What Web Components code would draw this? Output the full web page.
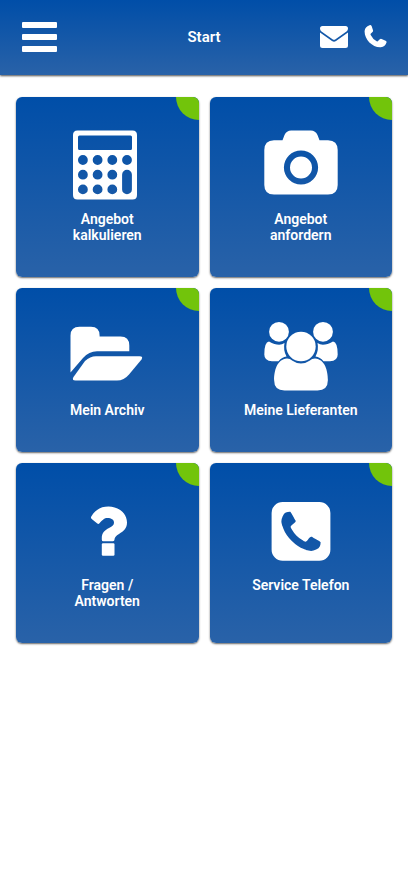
<!DOCTYPE html>
<html lang="de">
<head>
<meta charset="utf-8">
<meta name="viewport" content="width=device-width, initial-scale=1">
<title>Start</title>
<style>
body {
  margin: 0;
  background: #fff;
  font-family: Roboto, "Liberation Sans", sans-serif;
}
</style>
</head>
<body>

<start-page></start-page>

<template id="app-header-template">
<style>
:host {
  display: block;
  background: linear-gradient(#004ea8, #2962a8);
  box-shadow: 0 1px 2px rgba(0, 0, 0, 0.7);
  color: #fff;
}
header {
  display: grid;
  grid-template-columns: 1fr auto 1fr;
  align-items: center;
  box-sizing: border-box;
  height: 75px;
  padding: 0 21px 2px;
}
h1 {
  margin: 0;
  font-size: 15px;
  line-height: 16px;
  font-weight: 600;
}
nav {
  display: flex;
  justify-content: flex-end;
  align-items: center;
  gap: 16px;
}
button, a {
  display: block;
  padding: 0;
  border: 0;
  background: none;
  color: inherit;
}
button {
  justify-self: start;
  cursor: pointer;
}
svg {
  display: block;
  fill: currentColor;
}
</style>
<header>
  <button type="button" aria-label="Menü">
    <svg width="36" height="30" viewBox="0 0 36 30">
      <rect x="1" width="35" height="6" rx="1"/>
      <rect x="1" y="12" width="35" height="6" rx="1"/>
      <rect x="1" y="24" width="35" height="6" rx="1"/>
    </svg>
  </button>
  <h1><slot></slot></h1>
  <nav>
    <a href="#nachricht" aria-label="Nachricht">
      <svg width="28" height="24" viewBox="0 0 28 24">
        <path d="M0 3.500Q0 1 2.500 1H25.500Q28 1 28 3.500Q28 5.500 26.500 6.500L15.500 14.300Q14 15.300 12.500 14.300L1.500 6.500Q0 5.500 0 3.500Z"/>
        <path d="M0 7.600L12 16.100Q14 17.400 16 16.100L28 7.600V20.500Q28 23 25.500 23H2.500Q0 23 0 20.500Z"/>
      </svg>
    </a>
    <a href="#telefon" aria-label="Telefon">
      <svg width="23" height="24" viewBox="0 0 23 24">
        <path d="M5.500 .2Q7 -.2 7.700 1.200L9 5.300Q9.300 6.400 8.500 7.100L6.700 8.700Q6.300 9.200 6.700 10Q8.700 14.200 12.700 16.200Q13.500 16.600 14 16.100L15.800 14.300Q16.600 13.600 17.600 14L21.600 15.700Q22.800 16.300 22.500 17.600Q21.400 21.800 16.800 22.300C8.500 22.800 .2 14.500 .6 6Q1 1.600 5.500 .2Z"/>
      </svg>
    </a>
  </nav>
</header>
</template>

<template id="menu-tile-template">
<style>
:host {
  display: block;
}
a {
  position: relative;
  display: flex;
  flex-direction: column;
  align-items: center;
  gap: 10px;
  box-sizing: border-box;
  height: 100%;
  padding: 32px 16px 34px;
  overflow: hidden;
  border-radius: 6px;
  background: linear-gradient(#004ea8, #2962a8);
  box-shadow: 0 1px 2px rgba(0, 0, 0, 0.6);
  color: #fff;
  font-size: 14px;
  line-height: 16px;
  font-weight: 600;
  text-align: center;
  text-decoration: none;
}
/* green quarter circle in the corner */
a::after {
  content: "";
  position: absolute;
  top: -23px;
  right: -23px;
  width: 46px;
  height: 46px;
  border-radius: 50%;
  background: #72c40b;
}
::slotted(svg) {
  display: block;
  width: 80px;
  height: 72px;
  fill: #fff;
}
span {
  max-width: 115px;
}
</style>
<a>
  <slot name="icon"></slot>
  <span><slot></slot></span>
</a>
</template>

<template id="start-page-template">
<style>
:host {
  display: block;
}
main {
  display: grid;
  grid-template-columns: 1fr 1fr;
  gap: 11px;
  padding: 22px 16px;
}
</style>
<app-header>Start</app-header>
<main>
  <menu-tile href="#kalkulieren">
    <svg slot="icon" viewBox="0 0 80 72" aria-hidden="true">
      <path fill-rule="evenodd" d="M10 1.500H65.500Q70 1.500 70 6V66Q70 70.500 65.500 70.500H10.500Q6 70.500 6 66V6Q6 1.500 10.500 1.500ZM12.500 6.500Q11 6.500 11 8V19.500Q11 21 12.500 21H63.500Q65 21 65 19.500V8Q65 6.500 63.500 6.500ZM11 31a4.900 4.900 0 1 0 9.800 0a4.900 4.900 0 1 0-9.800 0ZM25.700 31a4.900 4.900 0 1 0 9.800 0a4.900 4.900 0 1 0-9.800 0ZM40.400 31a4.900 4.900 0 1 0 9.800 0a4.900 4.900 0 1 0-9.800 0ZM55.100 31a4.900 4.900 0 1 0 9.800 0a4.900 4.900 0 1 0-9.800 0ZM11 45.700a4.900 4.900 0 1 0 9.800 0a4.900 4.900 0 1 0-9.800 0ZM25.700 45.700a4.900 4.900 0 1 0 9.800 0a4.900 4.900 0 1 0-9.800 0ZM40.400 45.700a4.900 4.900 0 1 0 9.800 0a4.900 4.900 0 1 0-9.800 0ZM55.100 45.700a4.900 4.900 0 0 1 9.800 0V60.400a4.900 4.900 0 0 1-9.800 0ZM11 60.400a4.900 4.900 0 1 0 9.800 0a4.900 4.900 0 1 0-9.800 0ZM25.700 60.400a4.900 4.900 0 1 0 9.800 0a4.900 4.900 0 1 0-9.800 0ZM40.400 60.400a4.900 4.900 0 1 0 9.800 0a4.900 4.900 0 1 0-9.800 0Z"/>
    </svg>
    Angebot kalkulieren
  </menu-tile>
  <menu-tile href="#anfordern">
    <svg slot="icon" viewBox="0 0 80 72" aria-hidden="true">
      <path fill-rule="evenodd" d="M13 11.300H21.500L23.500 6Q25.500 1.500 30.200 1.500H49.800Q54.500 1.500 56.500 6L58.500 11.300H67Q76.700 11.500 76.700 21.100V56Q76.700 65.500 67 65.500H13Q3.300 65.500 3.300 56V21.100Q3.300 11.500 13 11.300ZM22.900 38.500a17.100 17.100 0 1 0 34.200 0a17.100 17.100 0 1 0-34.200 0ZM29 38.500a11 11 0 1 1 22 0a11 11 0 1 1-22 0Z"/>
    </svg>
    Angebot anfordern
  </menu-tile>
  <menu-tile href="#archiv">
    <svg slot="icon" viewBox="0 0 80 72" aria-hidden="true">
      <path d="M3.500 52.500V15.500Q3.500 6.700 12.500 6.700H24Q32.600 6.700 32.600 15.500V16.500H53.500Q62.300 16.500 62.300 25.500V31.300H30Q22 31.300 16 38Z"/>
      <path d="M18 41Q23 36.200 29 36.200H72.500Q76.500 36.200 74.500 39.500L62 54.500Q57 60.500 50 60.500H8.500Q4.500 60.500 6.500 57Z"/>
    </svg>
    Mein Archiv
  </menu-tile>
  <menu-tile href="#lieferanten">
    <svg slot="icon" viewBox="0 0 80 72" aria-hidden="true">
      <circle cx="18" cy="11.800" r="9.900"/>
      <circle cx="62" cy="11.800" r="9.900"/>
      <circle cx="40" cy="26.500" r="14.700"/>
      <path d="M8 21.500Q18 27 23.500 23Q22 30 25.500 36.500Q21 37 17.500 41.200H11Q3.300 41 3.300 34.500Q3.300 22 8 21.500Z"/>
      <path d="M72 21.500Q62 27 56.500 23Q58 30 54.500 36.500Q59 37 62.500 41.200H69Q76.700 41 76.700 34.500Q76.700 22 72 21.500Z"/>
      <path d="M26 38.500Q29 38.500 31.500 40.700Q40 46.500 48.500 40.700Q51 38.500 54 38.500C64 39 66.900 51 66.900 60Q66.900 70.500 56.500 70.500H23.500Q13.100 70.500 13.100 60C13.100 51 16 39 26 38.500Z"/>
    </svg>
    Meine Lieferanten
  </menu-tile>
  <menu-tile href="#fragen">
    <svg slot="icon" viewBox="0 0 80 72" aria-hidden="true">
      <path d="M24.300 21.500C28.500 14.500 34 11.500 41.500 11.500C51 11.500 60 18 60 27.500C60 33 57 36 52 39C49 40.800 47.500 42.500 47.500 44.500Q47.500 46.300 46 46.300H36.300Q34.800 46.300 34.800 44.800V42.500C34.800 38 38 35 42 33C45.500 31.300 47 30 47 27.500C47 24.500 44 23 40.700 23C37 23 35.500 25 32.500 28.300Q31.500 29.500 30.300 28.600L24.700 24Q23.500 23 24.300 21.500Z"/>
      <rect x="34.800" y="48.200" width="12.700" height="12.500" rx="1.200"/>
    </svg>
    Fragen / Antworten
  </menu-tile>
  <menu-tile href="#service">
    <svg slot="icon" viewBox="0 0 80 72" aria-hidden="true">
      <path transform="translate(5.700 2) scale(.03828)" d="M1408 1193q0-11-2-16t-18-16.500-40.500-25-47.500-26.500-45.500-25-28.500-15q-5-3-19-13t-25-15-21-5q-15 0-36.500 20.500t-39.500 45-38.500 45-33.500 20.500q-7 0-16.500-3.500t-15.500-6.500-17-9.500-14-8.500q-99-55-170-126.500t-127-170.500q-2-3-8.500-14t-9.500-17-6.500-15.500-3.500-16.500q0-13 20.500-33.500t45-38.500 45-39.500 20.500-36.500q0-10-5-21t-15-25-13-19q-3-6-15-28.500t-25-45.500-26.500-47.500-25-40.500-16.500-18-16-2q-48 0-101 22-46 21-80 94.500t-34 130.500q0 16 2.500 34t5 30.500 9 33 10 29.500 12.500 33 11 30q60 164 216.500 320.500t320.500 216.500q6 2 30 11t33 12.500 29.500 10 33 9 30.500 5 34 2.500q57 0 130.500-34t94.500-80q22-53 22-101zm256-777v960q0 119-84.500 203.500t-203.500 84.500h-960q-119 0-203.500-84.500t-84.500-203.500v-960q0-119 84.500-203.500t203.500-84.500h960q119 0 203.500 84.500t84.500 203.500z"/>
    </svg>
    Service Telefon
  </menu-tile>
</main>
</template>

<script>
class AppHeader extends HTMLElement {
  constructor() {
    super();
    const template = document.getElementById("app-header-template");
    this.attachShadow({ mode: "open" });
    this.shadowRoot.appendChild(template.content.cloneNode(true));
  }
}

class MenuTile extends HTMLElement {
  constructor() {
    super();
    const template = document.getElementById("menu-tile-template");
    this.attachShadow({ mode: "open" });
    this.shadowRoot.appendChild(template.content.cloneNode(true));
    this.link = this.shadowRoot.querySelector("a");
  }

  connectedCallback() {
    this.link.href = this.getAttribute("href");
  }
}

class StartPage extends HTMLElement {
  constructor() {
    super();
    const template = document.getElementById("start-page-template");
    this.attachShadow({ mode: "open" });
    this.shadowRoot.appendChild(template.content.cloneNode(true));
  }
}

customElements.define("app-header", AppHeader);
customElements.define("menu-tile", MenuTile);
customElements.define("start-page", StartPage);
</script>
</body>
</html>
